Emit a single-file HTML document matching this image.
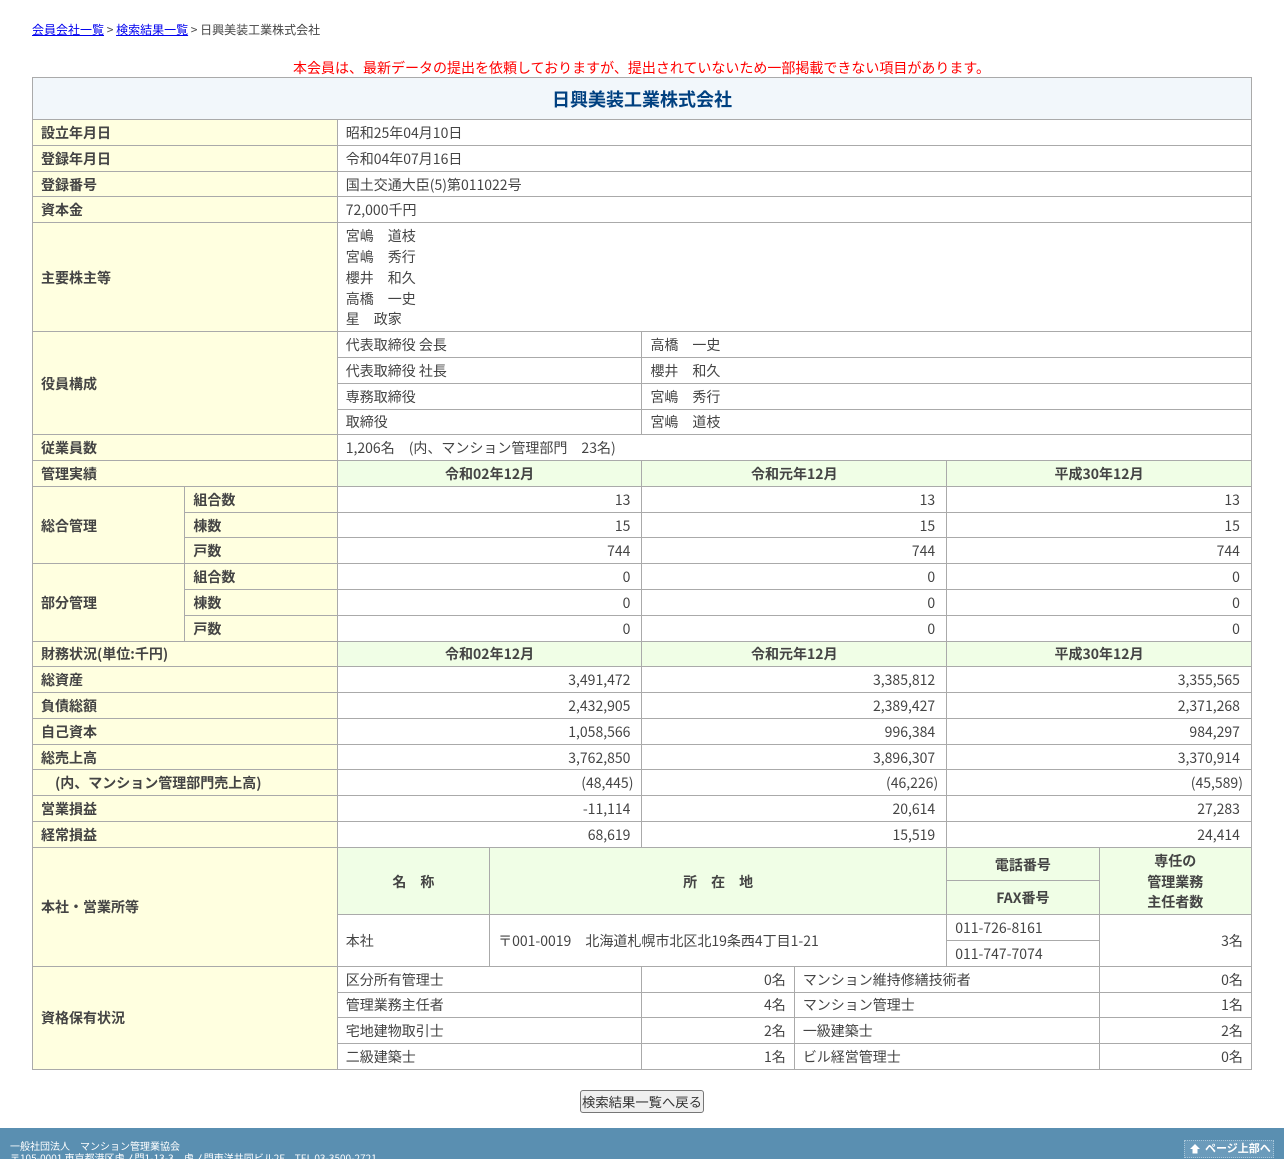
<!DOCTYPE html>
<html lang="ja">
<head>
<meta charset="utf-8">
<title>日興美装工業株式会社</title>
<style>
html,body{margin:0;padding:0;background:#fff;}
body{width:1284px;height:1159px;overflow:hidden;position:relative;font-family:"Noto Sans CJK JP","Liberation Sans",sans-serif;color:#444;font-size:14px;line-height:20.8px;}
.crumb{position:absolute;left:32px;top:20px;font-size:12px;line-height:19.2px;white-space:nowrap;}
.crumb a{color:#00e;text-decoration:underline;}
.notice{position:absolute;left:32px;width:1219px;top:58px;text-align:center;color:#f00;font-size:14px;line-height:20.8px;}
table{position:absolute;left:32px;top:77px;width:1219px;border-collapse:collapse;table-layout:fixed;}
th,td{border:1px solid #aaa;padding:2.95px 8px 1.05px;font-size:14px;line-height:20.8px;font-weight:normal;text-align:left;vertical-align:middle;overflow:hidden;white-space:nowrap;}
th{background:#ffffe0;font-weight:bold;}
th.h{background:#f0fee6;text-align:center;}
th.title{background:#f2f7fb;color:#004080;font-size:18px;text-align:center;height:37.1px;}
td.n{text-align:right;padding-right:11px;}
td.m{text-align:right;padding-right:8px;}
td.p{text-align:right;padding-right:8px;}
.btn{position:absolute;left:580px;top:1090px;width:124px;height:23px;box-sizing:border-box;border:1px solid #767676;border-radius:3px;background:#efefef;color:#333;font-size:13.33px;line-height:22px;text-align:center;white-space:nowrap;}
.foot{position:absolute;left:0;top:1128px;width:1284px;height:31px;background:#5a8fb1;color:#fff;overflow:hidden;font-size:10px;line-height:12px;}
.foot .t{position:absolute;left:10px;top:12px;white-space:nowrap;}
.top{position:absolute;left:1184px;top:12px;width:88px;height:16px;border:1px dotted #a9c6d9;background:#6b9bbb;color:#fff;font-size:11px;font-weight:bold;line-height:15px;white-space:nowrap;}
.top svg{position:absolute;left:5px;top:3px;}
.top span{position:absolute;left:20px;top:0;}
</style>
</head>
<body>
<div class="crumb"><a href="#">会員会社一覧</a> &gt; <a href="#">検索結果一覧</a> &gt; 日興美装工業株式会社</div>
<div class="notice">本会員は、最新データの提出を依頼しておりますが、提出されていないため一部掲載できない項目があります。</div>
<table>
<colgroup><col span="4" style="width:152.36px"><col span="4" style="width:152.39px"></colgroup>
<tr><th class="title" colspan="8">日興美装工業株式会社</th></tr>
<tr><th colspan="2">設立年月日</th><td colspan="6">昭和25年04月10日</td></tr>
<tr><th colspan="2">登録年月日</th><td colspan="6">令和04年07月16日</td></tr>
<tr><th colspan="2">登録番号</th><td colspan="6">国土交通大臣(5)第011022号</td></tr>
<tr><th colspan="2">資本金</th><td colspan="6">72,000千円</td></tr>
<tr><th colspan="2">主要株主等</th><td colspan="6">宮嶋　道枝<br>宮嶋　秀行<br>櫻井　和久<br>高橋　一史<br>星　政家</td></tr>
<tr><th colspan="2" rowspan="4">役員構成</th><td colspan="2">代表取締役 会長</td><td colspan="4">高橋　一史</td></tr>
<tr><td colspan="2">代表取締役 社長</td><td colspan="4">櫻井　和久</td></tr>
<tr><td colspan="2">専務取締役</td><td colspan="4">宮嶋　秀行</td></tr>
<tr><td colspan="2">取締役</td><td colspan="4">宮嶋　道枝</td></tr>
<tr><th colspan="2">従業員数</th><td colspan="6">1,206名　(内、マンション管理部門　23名)</td></tr>
<tr><th colspan="2">管理実績</th><th class="h" colspan="2">令和02年12月</th><th class="h" colspan="2">令和元年12月</th><th class="h" colspan="2">平成30年12月</th></tr>
<tr><th rowspan="3">総合管理</th><th>組合数</th><td class="n" colspan="2">13</td><td class="n" colspan="2">13</td><td class="n" colspan="2">13</td></tr>
<tr><th>棟数</th><td class="n" colspan="2">15</td><td class="n" colspan="2">15</td><td class="n" colspan="2">15</td></tr>
<tr><th>戸数</th><td class="n" colspan="2">744</td><td class="n" colspan="2">744</td><td class="n" colspan="2">744</td></tr>
<tr><th rowspan="3">部分管理</th><th>組合数</th><td class="n" colspan="2">0</td><td class="n" colspan="2">0</td><td class="n" colspan="2">0</td></tr>
<tr><th>棟数</th><td class="n" colspan="2">0</td><td class="n" colspan="2">0</td><td class="n" colspan="2">0</td></tr>
<tr><th>戸数</th><td class="n" colspan="2">0</td><td class="n" colspan="2">0</td><td class="n" colspan="2">0</td></tr>
<tr><th colspan="2">財務状況(単位:千円)</th><th class="h" colspan="2">令和02年12月</th><th class="h" colspan="2">令和元年12月</th><th class="h" colspan="2">平成30年12月</th></tr>
<tr><th colspan="2">総資産</th><td class="n" colspan="2">3,491,472</td><td class="n" colspan="2">3,385,812</td><td class="n" colspan="2">3,355,565</td></tr>
<tr><th colspan="2">負債総額</th><td class="n" colspan="2">2,432,905</td><td class="n" colspan="2">2,389,427</td><td class="n" colspan="2">2,371,268</td></tr>
<tr><th colspan="2">自己資本</th><td class="n" colspan="2">1,058,566</td><td class="n" colspan="2">996,384</td><td class="n" colspan="2">984,297</td></tr>
<tr><th colspan="2">総売上高</th><td class="n" colspan="2">3,762,850</td><td class="n" colspan="2">3,896,307</td><td class="n" colspan="2">3,370,914</td></tr>
<tr><th colspan="2" style="padding-left:22px">(内、マンション管理部門売上高)</th><td class="p" colspan="2">(48,445)</td><td class="p" colspan="2">(46,226)</td><td class="p" colspan="2">(45,589)</td></tr>
<tr><th colspan="2">営業損益</th><td class="n" colspan="2">-11,114</td><td class="n" colspan="2">20,614</td><td class="n" colspan="2">27,283</td></tr>
<tr><th colspan="2">経常損益</th><td class="n" colspan="2">68,619</td><td class="n" colspan="2">15,519</td><td class="n" colspan="2">24,414</td></tr>
<tr style="height:33.7px"><th colspan="2" rowspan="4">本社・営業所等</th><th class="h" rowspan="2">名　称</th><th class="h" colspan="3" rowspan="2">所　在　地</th><th class="h">電話番号</th><th class="h" rowspan="2">専任の<br>管理業務<br>主任者数</th></tr>
<tr style="height:33.7px"><th class="h">FAX番号</th></tr>
<tr><td rowspan="2">本社</td><td colspan="3" rowspan="2">〒001-0019　北海道札幌市北区北19条西4丁目1-21</td><td>011-726-8161</td><td class="p" rowspan="2">3名</td></tr>
<tr><td>011-747-7074</td></tr>
<tr><th colspan="2" rowspan="4">資格保有状況</th><td colspan="2">区分所有管理士</td><td class="m">0名</td><td colspan="2">マンション維持修繕技術者</td><td class="p">0名</td></tr>
<tr><td colspan="2">管理業務主任者</td><td class="m">4名</td><td colspan="2">マンション管理士</td><td class="p">1名</td></tr>
<tr><td colspan="2">宅地建物取引士</td><td class="m">2名</td><td colspan="2">一級建築士</td><td class="p">2名</td></tr>
<tr><td colspan="2">二級建築士</td><td class="m">1名</td><td colspan="2">ビル経営管理士</td><td class="p">0名</td></tr>
</table>
<div class="btn">検索結果一覧へ戻る</div>
<div class="foot">
<div class="t">一般社団法人　マンション管理業協会<br>〒105-0001 東京都港区虎ノ門1-13-3　虎ノ門東洋共同ビル2F　TEL 03-3500-2721</div>
<div class="top"><svg width="10" height="10" viewBox="0 0 10 10"><path d="M5 0L10 5H7.5V9.5H2.5V5H0Z" fill="#fff"/></svg><span>ページ上部へ</span></div>
</div>
</body>
</html>
